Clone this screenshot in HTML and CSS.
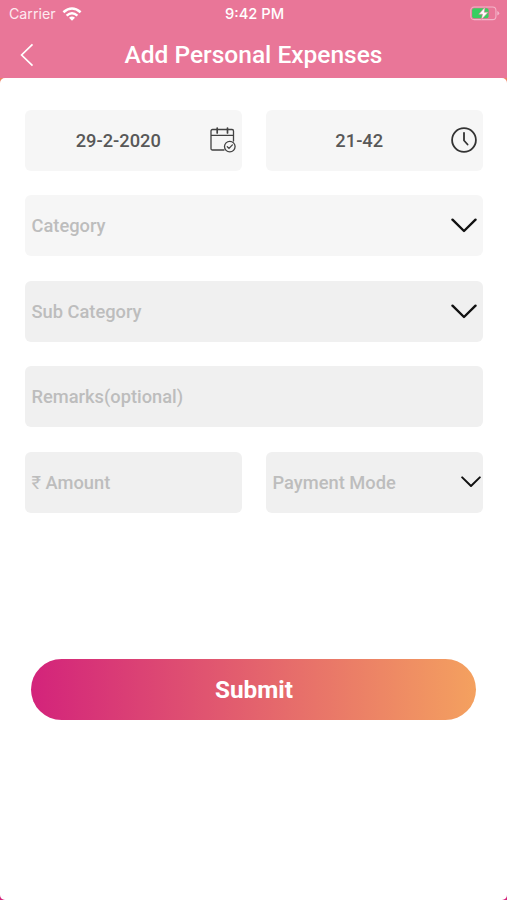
FILE: index.html
```html
<!DOCTYPE html>
<html lang="en">
<head>
<meta charset="utf-8">
<title>Add Personal Expenses</title>
<link rel="stylesheet" href="styles.css">
</head>
<body>
<div class="screen">
  <header class="top">
    <div class="status">
      <div class="carrier">
        <span>Carrier</span>
        <svg width="20" height="14" viewBox="0 0 20 14" fill="none" stroke="#fff" stroke-width="2.5"><path d="M1.4 5.3Q10-2.3 18.6 5.3M4.6 8.6Q10 4 15.4 8.6"/><path d="M7 10.7Q10 8.3 13 10.7L10 13.8Z" fill="#fff" stroke="none"/></svg>
      </div>
      <span class="time">9:42 PM</span>
      <svg class="battery" width="30" height="15" viewBox="0 0 31 15"><rect x=".8" y=".8" width="26" height="13" rx="3.5" fill="none" stroke="#f3b5ca" stroke-width="1.1"/><rect x="2.2" y="2.2" width="17" height="10.2" rx="2" fill="#36cf60"/><path d="M28.2 5v4.600q2-.8 2-2.300t-2-2.300" fill="#f3b5ca"/><path d="M15.500 1 9 8.200h3.900L11.800 13.700 18.700 6.200h-4z" fill="#fff" stroke="#e97698" stroke-width=".6"/></svg>
    </div>
    <div class="nav">
      <svg class="back" width="14" height="24" viewBox="0 0 14 24" fill="none" stroke="#fff" stroke-width="1.7"><path d="M12.500 1.300 1.600 12l10.900 10.700"/></svg>
      <h1>Add Personal Expenses</h1>
    </div>
  </header>
  <main class="sheet">
    <form class="form">
      <div class="field light value">
        <span>29-2-2020</span>
        <svg class="icon" width="26" height="26" viewBox="0 0 26 26" fill="none" stroke="#424242" stroke-width="1.300" stroke-linecap="round"><path d="M14 23H2.500Q1 23 1 21.500V4Q1 2.500 2.500 2.500H22Q23.500 2.500 23.500 4V14M1 8.300H23.500"/><path d="M7.200 1v5M17.500 1v5" stroke-width="1.700"/><circle cx="19.800" cy="19.600" r="5.300"/><path d="m17.300 19.800 1.700 1.600 3.400-3.500"/></svg>
      </div>
      <div class="field light value">
        <span>21-42</span>
        <svg class="icon" width="26" height="26" viewBox="0 0 26 26" fill="none" stroke="#333" stroke-width="1.800" stroke-linecap="round" stroke-linejoin="round"><circle cx="13" cy="13" r="11.900"/><path d="M13 5.800V13.500L16.600 17.500"/></svg>
      </div>
      <div class="field light wide">
        <span>Category</span>
        <svg width="26" height="15" viewBox="0 0 26 15" class="chevron"><path d="M1.500 1.700 13 13 24.500 1.700"/></svg>
      </div>
      <div class="field wide">
        <span>Sub Category</span>
        <svg width="26" height="15" viewBox="0 0 26 15" class="chevron"><path d="M1.500 1.700 13 13 24.500 1.700"/></svg>
      </div>
      <div class="field wide"><span>Remarks(optional)</span></div>
      <div class="field"><span><span class="rupee">₹</span> Amount</span></div>
      <div class="field mode">
        <span>Payment Mode</span>
        <svg width="20" height="12" viewBox="0 0 20 12" class="chevron small"><path d="M1.200 1.400 10 10 18.800 1.400"/></svg>
      </div>
    </form>
    <button class="submit" type="button">Submit</button>
  </main>
</div>
</body>
</html>
```
FILE: styles.css
```css
* { box-sizing: border-box; }
body { margin: 0; font-family: Roboto, "Noto Sans", sans-serif; }
.screen {
  width: 507px;
  height: 900px;
  display: flex;
  flex-direction: column;
  background: linear-gradient(#f08c62, #d3237b);
}
.top { height: 78px; background: #e97698; color: #fff; }
.status {
  height: 27px;
  padding: 0 7px 0 9px;
  display: grid;
  grid-template-columns: 1fr auto 1fr;
  align-items: center;
  font-family: Inter, sans-serif;
  font-size: 14.5px;
}
.carrier { display: flex; align-items: center; gap: 6px; color: #fdeaf0; font-size: 14.2px; }
.time { font-weight: 500; font-size: 14.7px; }
.battery { justify-self: end; }
.nav {
  height: 51px;
  padding: 0 20px;
  display: grid;
  grid-template-columns: 14px 1fr 14px;
  align-items: center;
}
.nav h1 {
  margin: 5px 0 0;
  text-align: center;
  font-size: 24.5px;
  line-height: 30px;
  font-weight: 500;
  white-space: nowrap;
}
.back { margin-top: 5px; }
.sheet {
  flex: 1;
  padding: 31.9px 24px 0 25px;
  background: #fff;
  border-radius: 5px;
}
.form {
  display: grid;
  grid-template-columns: 217px 217px;
  column-gap: 24px;
  row-gap: 24.5px;
}
.field {
  height: 61px;
  padding: 0 6px 0 6.5px;
  display: flex;
  align-items: center;
  justify-content: space-between;
  border-radius: 6px;
  background: #f0f0f0;
  color: #bdbdbd;
  font-size: 18.3px;
  font-weight: 500;
}
.light { background: #f6f6f6; }
.wide { grid-column: 1 / -1; }
.value { color: #585858; }
.value span { flex: 1; padding-right: 5px; text-align: center; }
.mode { padding-right: 2px; }
.rupee { display: inline-block; width: 9.5px; font-weight: 400; }
.chevron {
  fill: none;
  stroke: #111;
  stroke-width: 2.4;
  stroke-linecap: round;
  stroke-linejoin: round;
}
.small { stroke-width: 2; }
.submit {
  display: block;
  width: 445px;
  height: 61px;
  margin: 146.2px 0 0 6.4px;
  border: 0;
  border-radius: 31px;
  background: linear-gradient(90deg, #d3237b, #f4a15f);
  color: #fff;
  font: 700 24.3px Roboto, sans-serif;
}
```
